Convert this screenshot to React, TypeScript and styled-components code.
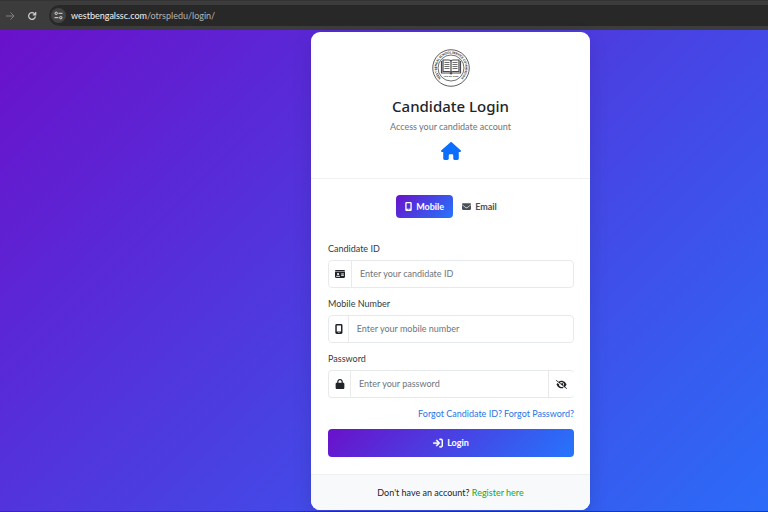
import React from "react";
import styled, { createGlobalStyle } from "styled-components";
import {
  FaArrowRightToBracket,
  FaEnvelope,
  FaEyeSlash,
  FaHouse,
  FaIdCard,
  FaLock,
} from "react-icons/fa6";

const GlobalStyle = createGlobalStyle`
  *, *::before, *::after { box-sizing: border-box; }
  html, body, #root { height: 100%; }
  body {
    margin: 0;
    color: #212529;
    font-family: Lato, "Noto Sans", sans-serif;
    font-size: 9px;
    line-height: 14px;
  }
  button, input { font: inherit; }
`;

const brandGradient = "linear-gradient(135deg, #6a11cb 0%, #2575fc 100%)";

const Screen = styled.div`
  display: flex;
  flex-direction: column;
  min-height: 100%;
`;

const BrowserBar = styled.header`
  display: flex;
  align-items: center;
  height: 30px;
  padding-left: 5px;
  gap: 12px;
  background: #3c3c3c;
  border-top: 1px solid #333333;
`;

const BarButton = styled.button<{ $dim?: boolean }>`
  display: flex;
  padding: 0;
  border: 0;
  background: none;
  color: ${(p) => (p.$dim ? "#808080" : "#d0d0d0")};
`;

const AddressBar = styled.div`
  flex: 1;
  display: flex;
  align-items: center;
  height: 21px;
  gap: 5px;
  padding-left: 2px;
  background: #282828;
  border-radius: 11px 0 0 11px;
`;

const SiteInfo = styled.button`
  display: flex;
  align-items: center;
  justify-content: center;
  width: 15px;
  height: 15px;
  padding: 0;
  border: 0;
  border-radius: 50%;
  background: #434343;
  color: #dddddd;
`;

const Address = styled.span`
  color: #b4b4b4;
`;

const Host = styled.span`
  color: #f4f4f4;
`;

const Page = styled.main`
  flex: 1;
  display: flex;
  justify-content: center;
  align-items: flex-start;
  padding: 2px 0 1px 133px;
  background: ${brandGradient} 0 0 / calc(100% + 133px) 100% no-repeat;
  border-bottom: 1px solid #2b2fa8;
`;

const Card = styled.section`
  width: 279px;
  overflow: hidden;
  background: #ffffff;
  border-radius: 9px;
  box-shadow: 0 6px 20px rgba(0, 0, 0, 0.12);
`;

const CardHeader = styled.div`
  display: flex;
  flex-direction: column;
  align-items: center;
  padding: 17px 16px;
  border-bottom: 1px solid #f1f1f3;
`;

const Title = styled.h1`
  margin: 9px 0 4px;
  font-family: "Noto Sans", sans-serif;
  font-size: 15px;
  line-height: 20px;
  font-weight: 500;
`;

const Subtitle = styled.p`
  margin: 0 0 7px;
  color: #6c757d;
`;

const HomeLink = styled.a`
  display: flex;
  color: #0d6efd;
`;

const CardBody = styled.form`
  display: flex;
  flex-direction: column;
  padding: 16px 16px 17px 17px;
`;

const Tabs = styled.div`
  display: flex;
  justify-content: center;
  margin-bottom: 24px;
`;

const Tab = styled.button<{ $active?: boolean }>`
  display: flex;
  align-items: center;
  height: 23px;
  gap: 4px;
  padding: 0 9px;
  border: 0;
  border-radius: 4px;
  background: ${(p) => (p.$active ? brandGradient : "none")};
  color: ${(p) => (p.$active ? "#ffffff" : "#495057")};
  font-weight: 700;

  svg {
    width: auto;
    height: 9px;
  }
`;

const Field = styled.div`
  display: flex;
  flex-direction: column;
  gap: 4px;
  margin-bottom: 9px;
`;

const Label = styled.label`
  color: #343a40;
`;

const InputGroup = styled.div<{ $open?: boolean }>`
  display: flex;
  height: 28px;
  border: 1px solid #e6eaed;
  border-right-width: ${(p) => (p.$open ? 0 : 1)}px;
  border-radius: 4px;
`;

const Addon = styled.span<{ $wide?: boolean }>`
  display: flex;
  align-items: center;
  padding: 0 ${(p) => (p.$wide ? 6 : 5)}px 0 6px;
  border-right: 1px solid #e6eaed;

  svg {
    width: auto;
    height: 10px;
  }
`;

const TextInput = styled.input`
  flex: 1;
  min-width: 0;
  padding: 0 8px;
  border: 0;
  background: none;
  color: #212529;
  &::placeholder {
    color: #6c757d;
    opacity: 1;
  }
`;

const RevealButton = styled.button`
  display: flex;
  align-items: center;
  padding: 0 7px;
  border: 0;
  border-left: 1px solid #e6eaed;
  background: none;
  color: #212529;
`;

const HelpLinks = styled.div`
  display: flex;
  justify-content: flex-end;
  gap: 2px;
  margin-bottom: 8px;
`;

const TextLink = styled.a<{ $green?: boolean }>`
  color: ${(p) => (p.$green ? "#18a818" : "#2575e6")};
  text-decoration: none;
`;

const LoginButton = styled.button`
  display: flex;
  align-items: center;
  justify-content: center;
  height: 28px;
  gap: 4px;
  border: 0;
  border-radius: 4px;
  background: ${brandGradient};
  color: #ffffff;
  font-weight: 700;

  svg {
    stroke: currentColor;
    stroke-width: 20px;
  }
`;

const CardFooter = styled.div`
  padding: 11px 16px 10px;
  border-top: 1px solid #eef0f2;
  background: #f8f9fa;
  text-align: center;
`;

function PhoneIcon() {
  return (
    <svg width="7" height="9" viewBox="0 0 14 18" fill="currentColor" aria-hidden="true">
      <path
        fillRule="evenodd"
        d="M3 0h8a2.5 2.5 0 0 1 2.5 2.5v13A2.5 2.5 0 0 1 11 18H3A2.5 2.5 0 0 1 .5 15.5v-13A2.5 2.5 0 0 1 3 0zM3.2 2.7v10.6h7.6V2.7zM5.5 15.1v1h3v-1z"
      />
    </svg>
  );
}

function Seal() {
  return (
    <svg width="38" height="38" viewBox="0 0 76 76" role="img" aria-label="West Bengal School Service Commission">
      <defs>
        <path id="seal-ring" d="M18 58 A28.5 28.5 0 1 1 58 58" />
      </defs>
      <g fill="none" stroke="#4a4a4a">
        <circle cx="38" cy="38" r="36.5" strokeWidth="1.8" />
        <circle cx="38" cy="38" r="26" strokeWidth="1.6" />
        <path d="M19 24v24h17l2 2 2-2h17V24" strokeWidth="2.4" />
        <path d="M22 22h12q4 0 4 3 0-3 4-3h12v23H42q-4 0-4 3 0-3-4-3H22zM38 25v23" strokeWidth="2.4" />
        <path d="M25 27h10M25 31h10M25 35h10M25 39h10M41 27h10M41 31h10M41 35h10M41 39h10" strokeWidth="1.6" />
      </g>
      <text fontSize="6" fontWeight="900" fill="#222222" textAnchor="middle">
        <textPath href="#seal-ring" startOffset="50%">
          WEST BENGAL SCHOOL SERVICE COMMISSION
        </textPath>
      </text>
      <text x="38" y="56" fontSize="5" fontWeight="900" textAnchor="middle" fill="#222222">
        ACT OF 1997
      </text>
    </svg>
  );
}

export default function App() {
  return (
    <Screen>
      <GlobalStyle />
      <BrowserBar>
        <BarButton type="button" aria-label="Forward" $dim>
          <svg width="10" height="10" viewBox="0 0 10 10" fill="none" stroke="currentColor" strokeWidth="1">
            <path d="M1 5h8M5.5 1.5L9 5L5.5 8.5" />
          </svg>
        </BarButton>
        <BarButton type="button" aria-label="Reload">
          <svg width="10" height="10" viewBox="0 0 10 10" fill="none" stroke="currentColor" strokeWidth="1.2">
            <path d="M8.4 5.4A3.4 3.4 0 1 1 7.5 2.6L8.6 3.7M8.7 1v2.9H5.8" />
          </svg>
        </BarButton>
        <AddressBar>
          <SiteInfo type="button" aria-label="Site information">
            <svg width="9" height="9" viewBox="0 0 9 9" fill="none" stroke="currentColor" strokeWidth="1">
              <path d="M4.5 2.3H8.5M.5 6.7h4" />
              <circle cx="2.2" cy="2.3" r="1.2" />
              <circle cx="6.8" cy="6.7" r="1.2" />
            </svg>
          </SiteInfo>
          <Address>
            <Host>westbengalssc.com</Host>/otrspledu/login/
          </Address>
        </AddressBar>
      </BrowserBar>
      <Page>
        <Card>
          <CardHeader>
            <Seal />
            <Title>Candidate Login</Title>
            <Subtitle>Access your candidate account</Subtitle>
            <HomeLink href="#home" aria-label="Home">
              <FaHouse size={20} />
            </HomeLink>
          </CardHeader>
          <CardBody>
            <Tabs>
              <Tab type="button" $active>
                <PhoneIcon />
                Mobile
              </Tab>
              <Tab type="button">
                <FaEnvelope />
                Email
              </Tab>
            </Tabs>
            <Field>
              <Label htmlFor="candidate-id">Candidate ID</Label>
              <InputGroup>
                <Addon $wide>
                  <FaIdCard />
                </Addon>
                <TextInput id="candidate-id" placeholder="Enter your candidate ID" />
              </InputGroup>
            </Field>
            <Field>
              <Label htmlFor="mobile">Mobile Number</Label>
              <InputGroup>
                <Addon>
                  <PhoneIcon />
                </Addon>
                <TextInput id="mobile" type="tel" placeholder="Enter your mobile number" />
              </InputGroup>
            </Field>
            <Field>
              <Label htmlFor="password">Password</Label>
              <InputGroup $open>
                <Addon>
                  <FaLock />
                </Addon>
                <TextInput id="password" type="password" placeholder="Enter your password" />
                <RevealButton type="button" aria-label="Show password">
                  <FaEyeSlash size={11} />
                </RevealButton>
              </InputGroup>
            </Field>
            <HelpLinks>
              <TextLink href="#forgot-id">Forgot Candidate ID?</TextLink>
              <TextLink href="#forgot-password">Forgot Password?</TextLink>
            </HelpLinks>
            <LoginButton type="button">
              <FaArrowRightToBracket size={10} />
              Login
            </LoginButton>
          </CardBody>
          <CardFooter>
            Don't have an account?{" "}
            <TextLink href="#register" $green>
              Register here
            </TextLink>
          </CardFooter>
        </Card>
      </Page>
    </Screen>
  );
}
